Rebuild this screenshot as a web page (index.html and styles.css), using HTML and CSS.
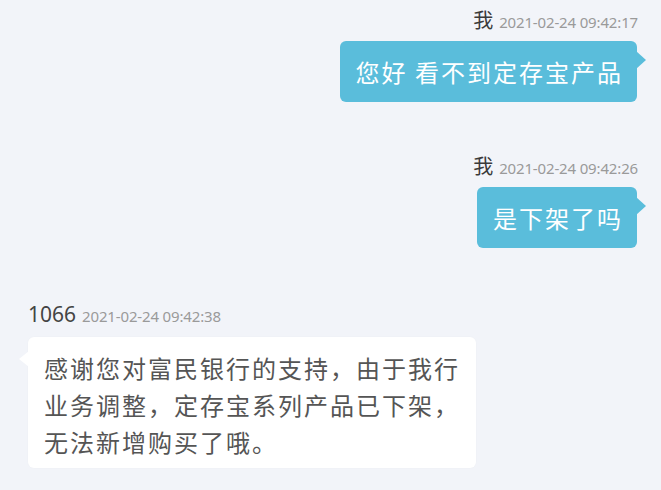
FILE: index.html
```html
<!DOCTYPE html>
<html lang="zh-CN">
<head>
<meta charset="utf-8">
<link rel="stylesheet" href="styles.css">
</head>
<body>
<div class="chat">
  <div class="msg msg-me">
    <div class="meta"><span class="name">我</span><span class="time">2021-02-24 09:42:17</span></div>
    <div class="bubble bubble-me">您好 看不到定存宝产品</div>
  </div>
  <div class="msg msg-me">
    <div class="meta"><span class="name">我</span><span class="time">2021-02-24 09:42:26</span></div>
    <div class="bubble bubble-me">是下架了吗</div>
  </div>
  <div class="msg msg-other">
    <div class="meta"><span class="name name-num">1066</span><span class="time">2021-02-24 09:42:38</span></div>
    <div class="bubble bubble-other">感谢您对富民银行的支持，由于我行<br>业务调整，定存宝系列产品已下架，<br>无法新增购买了哦。</div>
  </div>
</div>
</body>
</html>
```
FILE: styles.css
```css
html, body {
  margin: 0;
  padding: 0;
  background: #f2f4f9;
}
body {
  width: 661px;
  height: 490px;
  overflow: hidden;
  font-family: "Noto Sans", "Noto Sans CJK SC", sans-serif;
}
.chat {
  display: flex;
  flex-direction: column;
  padding: 8px 23px 0 28px;
  gap: 52px;
}
.msg {
  display: flex;
  flex-direction: column;
  gap: 9px;
}
.msg-me {
  align-items: flex-end;
}
.msg-other {
  align-items: flex-start;
  gap: 11px;
  margin-top: 2px;
}
.meta {
  display: flex;
  align-items: baseline;
  gap: 6px;
  height: 24px;
  line-height: 24px;
}
.name {
  font-family: "Noto Sans CJK SC", sans-serif;
  font-size: 20px;
  color: #3a3a3a;
}
.name-num {
  font-family: "Noto Sans", "Noto Sans CJK SC", sans-serif;
  font-size: 21px;
  color: #444;
}
.time {
  font-size: 15px;
  color: #9a9a9a;
  letter-spacing: -0.15px;
}
.bubble {
  position: relative;
  font-family: "Noto Sans CJK SC", sans-serif;
  font-size: 24px;
  letter-spacing: 2px;
  line-height: 37px;
  border-radius: 6px;
  white-space: nowrap;
}
.bubble-me {
  background: #5abddb;
  color: #ffffff;
  padding: 12px 14px 12px 16px;
  margin-right: 1px;
}
.bubble-me::after {
  content: "";
  position: absolute;
  right: -9px;
  top: 10px;
  border-left: 10px solid #5abddb;
  border-top: 9px solid transparent;
  border-bottom: 9px solid transparent;
}
.bubble-other {
  background: #ffffff;
  color: #555555;
  padding: 12px 16px 8px 16px;
  box-shadow: 0 0 2px rgba(0, 0, 0, 0.03);
}
.bubble-other::before {
  content: "";
  position: absolute;
  left: -9px;
  top: 14px;
  border-right: 10px solid #ffffff;
  border-top: 8px solid transparent;
  border-bottom: 8px solid transparent;
}
```
